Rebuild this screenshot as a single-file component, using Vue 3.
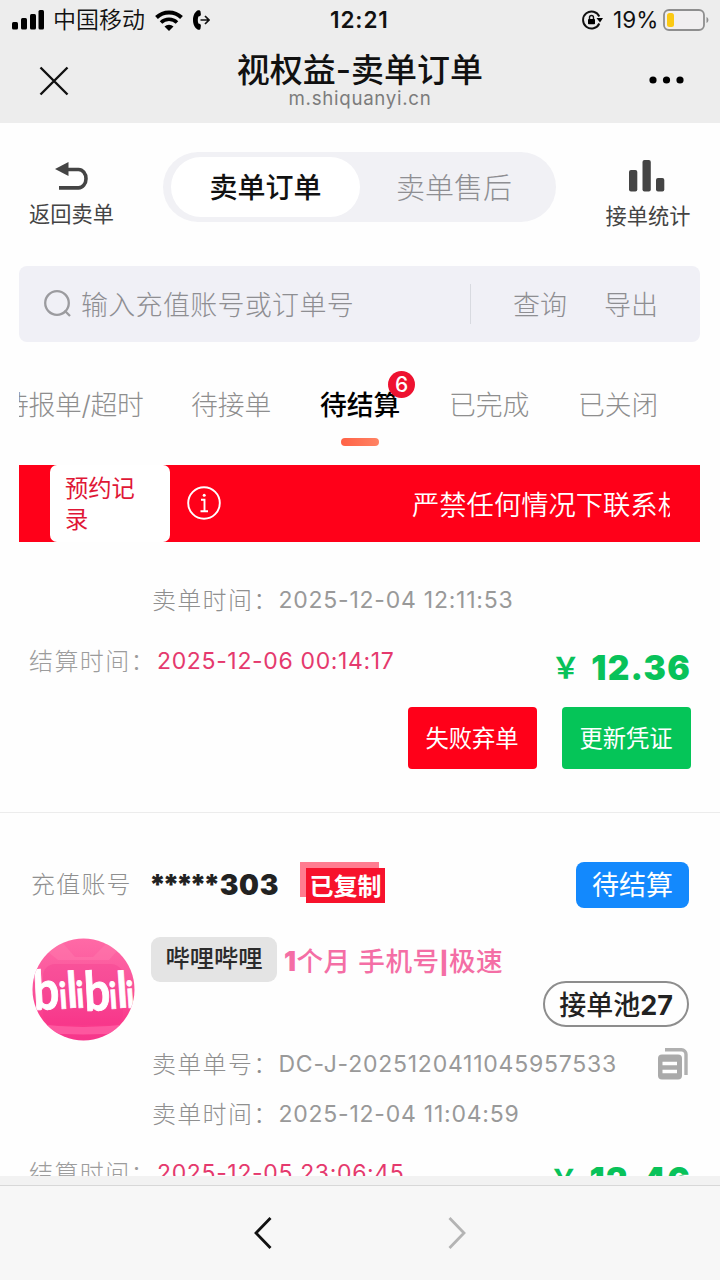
<script setup>
const tabs = [
  { label: '待报单/超时' },
  { label: '待接单' },
  { label: '待结算', active: true, count: 6 },
  { label: '已完成' },
  { label: '已关闭' },
]
</script>

<template>
  <div class="phone">
    <header class="top">
      <div class="status">
        <svg class="signal" width="32" height="20" viewBox="0 0 32 20">
          <rect x="0" y="12" width="6" height="7.5" rx="1.5" />
          <rect x="9" y="8" width="6" height="11.5" rx="1.5" />
          <rect x="18" y="4" width="6" height="15.5" rx="1.5" />
          <rect x="26.500" y="0" width="5.500" height="19.500" rx="1.5" />
        </svg>
        <span class="carrier">中国移动</span>
        <svg class="wifi" width="28" height="21" viewBox="0 0 28 21">
          <path d="M1.500 7.500a18 18 0 0 1 25 0" fill="none" stroke="#000" stroke-width="4" />
          <path d="M6 12.500a11.500 11.500 0 0 1 16 0" fill="none" stroke="#000" stroke-width="3.600" />
          <path d="M9.500 16.500a6.500 6.500 0 0 1 9 0L14 21z" />
        </svg>
        <svg class="call" width="17" height="20" viewBox="0 0 17 20">
          <path d="M5 .3c1.500-.5 2.300.2 2.500 1.200l.4 2.800c0 1.400-.8 1.800-2.500 2.200-.8 2.200-.8 4.800 0 7 1.700.4 2.500.8 2.500 2.200l-.4 2.800c-.2 1-1 1.700-2.500 1.200C2 18.500 0 14.500 0 10S2 1.500 5 .3z" />
          <path d="M7.500 10H16M12 6l4 4-4 4" fill="none" stroke="#111" stroke-width="1.700" />
        </svg>
        <span class="clock">12:21</span>
        <svg class="lock" width="21" height="20" viewBox="0 0 21 20">
          <path d="M17.300 13.500A8.500 8.500 0 1 1 17.300 6.500" fill="none" stroke="#111" stroke-width="1.900" />
          <path d="M14.500 8H21l-3 4.500z" />
          <rect x="6" y="9" width="7" height="5.300" rx=".8" />
          <path d="M7.500 9V7.500a2 2 0 0 1 4 0V9" fill="none" stroke="#111" stroke-width="1.400" />
        </svg>
        <span class="percent">19%</span>
        <svg class="battery" width="46" height="23" viewBox="0 0 46 23">
          <rect x="1" y="1" width="40" height="20" rx="5" fill="#f1eff0" stroke="#8e8e8e" stroke-width="1.800" />
          <rect x="4" y="4" width="7" height="14" rx="2.500" fill="#fbc914" />
          <path d="M43.500 8c2.500 1 2.500 5 0 6z" fill="#8e8e8e" />
        </svg>
      </div>
      <div class="nav">
        <svg class="close" width="30" height="30" viewBox="0 0 30 30">
          <path d="M1.500 1.500l27 27M28.500 1.500l-27 27" fill="none" stroke="#111" stroke-width="2.400" />
        </svg>
        <div class="heading">
          <div class="title">视权益-卖单订单</div>
          <div class="url">m.shiquanyi.cn</div>
        </div>
        <svg class="more" width="36" height="8" viewBox="0 0 36 8">
          <circle cx="4" cy="4" r="3.600" /><circle cx="17.500" cy="4" r="3.600" /><circle cx="31" cy="4" r="3.600" />
        </svg>
      </div>
    </header>

    <main class="page">
      <section class="toolbar">
        <div class="tool back">
          <svg width="34" height="28" viewBox="0 0 34 28">
            <path d="M12 7.500h11.500a7.500 9.200 0 0 1 0 18.400H4" fill="none" stroke="#444" stroke-width="3.600" />
            <path d="M0 7L13.500 0v14z" fill="#444" />
          </svg>
          <span>返回卖单</span>
        </div>
        <div class="segment">
          <span class="seg on">卖单订单</span>
          <span class="seg off">卖单售后</span>
        </div>
        <div class="tool stats">
          <svg width="36" height="32" viewBox="0 0 36 32" fill="#444">
            <rect x="0" y="10" width="8.300" height="21.500" rx="2" />
            <rect x="13.500" y="0" width="8.300" height="31.500" rx="2" />
            <rect x="27" y="18" width="8.300" height="13.500" rx="2" />
          </svg>
          <span>接单统计</span>
        </div>
      </section>

      <section class="search">
        <svg width="28" height="28" viewBox="0 0 28 28" fill="none" stroke="#9b9b9f" stroke-width="2.300">
          <circle cx="13" cy="13" r="11.800" />
          <path d="M20.500 20.500l5.500 5.500" />
        </svg>
        <span class="placeholder">输入充值账号或订单号</span>
        <span class="query">查询</span>
        <span class="export">导出</span>
      </section>

      <nav class="tabs">
        <div v-for="t in tabs" :key="t.label" class="tab" :class="{ active: t.active }">
          {{ t.label }}<b v-if="t.count" class="count">{{ t.count }}</b>
        </div>
      </nav>

      <section class="notice">
        <div class="booking">预约记<br />录</div>
        <svg width="34" height="34" viewBox="0 0 34 34" fill="none" stroke="#fff" stroke-width="1.900">
          <circle cx="17" cy="17" r="15.800" />
          <path d="M14 13.800h3.500v11M13.500 25.300h7.500" />
          <circle cx="17.200" cy="9.300" r="1.500" fill="#fff" stroke="none" />
        </svg>
        <div class="marquee">严禁任何情况下联系机主</div>
      </section>

      <article class="order first">
        <div class="meta sold">卖单时间：<span class="num">2025-12-04 12:11:53</span></div>
        <div class="settle">
          <span class="label">结算时间：</span><span class="date">2025-12-06 00:14:17</span>
          <span class="price"><i>￥</i>12.36</span>
        </div>
        <div class="actions">
          <button class="btn fail">失败弃单</button>
          <button class="btn update">更新凭证</button>
        </div>
      </article>

      <article class="order second">
        <div class="account">
          <span class="label">充值账号</span>
          <strong><span class="stars">*****</span>303</strong>
          <span class="copied"><em>已复制</em></span>
          <span class="state">待结算</span>
        </div>
        <div class="product">
          <svg class="avatar" width="104" height="104" viewBox="0 0 104 104">
            <defs>
              <clipPath id="disc"><circle cx="52.500" cy="51.500" r="51" /></clipPath>
              <linearGradient id="pink" x1="0" y1="0" x2="0" y2="1">
                <stop offset="0" stop-color="#ff6aa6" />
                <stop offset=".5" stop-color="#f9529a" />
                <stop offset=".8" stop-color="#fb3a8b" />
                <stop offset="1" stop-color="#f5358b" />
              </linearGradient>
            </defs>
            <g clip-path="url(#disc)">
              <rect width="104" height="104" fill="url(#pink)" />
              <path d="M31 4l13 15h18L77 4l9 9-8 9H27l-10-8z" fill="#ff83b2" opacity=".35" />
              <rect x="12" y="26" width="80" height="61" rx="12" fill="#f2358c" opacity=".3" />
              <path d="M0 85q52 8 104 0v9q-52 5-104 0z" fill="#ff65a8" opacity=".7" />
              <g fill="#fff" font-family="Lato" font-weight="700" stroke="#fff" stroke-width=".8">
                <text transform="translate(3 72) rotate(-3) scale(1 1.180)" font-size="46">b</text>
                <text transform="translate(29 71) rotate(-4) scale(.85 1)" font-size="37">i</text>
                <text transform="translate(37 70) rotate(-4) scale(.85 1)" font-size="50">l</text>
                <text transform="translate(46 70) rotate(-4) scale(.85 1)" font-size="37">i</text>
                <text transform="translate(54 73) rotate(-3) scale(1 1.180)" font-size="46">b</text>
                <text transform="translate(79 71) rotate(-4) scale(.85 1)" font-size="37">i</text>
                <text transform="translate(87 70) rotate(-4) scale(.85 1)" font-size="50">l</text>
                <text transform="translate(96 70) rotate(-4) scale(.85 1)" font-size="37">i</text>
              </g>
            </g>
          </svg>
          <span class="tag">哔哩哔哩</span>
          <span class="plan"><b>1</b>个月 手机号<b class="bar">|</b>极速</span>
          <span class="pool">接单池<b>27</b></span>
        </div>
        <div class="meta number">卖单单号：<span class="num">DC-J-2025120411045957533</span>
          <svg class="copy" width="30" height="32" viewBox="0 0 30 32">
            <path d="M7 1.800h16.500a4.500 4.500 0 0 1 4.500 4.500V27" fill="none" stroke="#b0b0b0" stroke-width="3.400" />
            <rect x="0" y="6.500" width="24" height="25" rx="4" fill="#aaa" />
            <path d="M4.500 15.500h14.500M4.500 23.500h14.500" stroke="#fff" stroke-width="3.600" />
          </svg>
        </div>
        <div class="meta sold2">卖单时间：<span class="num">2025-12-04 11:04:59</span></div>
        <div class="settle">
          <span class="label">结算时间：</span><span class="date">2025-12-05 23:06:45</span>
          <span class="price"><i>￥</i>12.46</span>
        </div>
      </article>
    </main>

    <footer class="bottom">
      <svg width="20" height="34" viewBox="0 0 20 34"><path d="M17.500 2L3 17l14.500 15" fill="none" stroke="#111" stroke-width="2.800" /></svg>
      <svg width="20" height="34" viewBox="0 0 20 34"><path d="M2.500 2L17 17 2.500 32" fill="none" stroke="#b4b4b4" stroke-width="2.800" /></svg>
    </footer>
  </div>
</template>

<style>
body { margin: 0; background: #fff; }
</style>

<style scoped>
* { box-sizing: border-box; }
svg { display: block; flex: none; }
.phone { width: 720px; height: 1280px; overflow: hidden; display: flex; flex-direction: column; background: #fefefe; font-family: Inter, "Noto Sans CJK SC", sans-serif; white-space: nowrap; color: #111; }
.top { height: 123px; background: #ededed; flex: none; }
.status { height: 40px; display: flex; align-items: center; padding-left: 12px; line-height: 40px; }
.carrier { margin-left: 9px; font-size: 23px; width: 94px; font-weight: 350; }
.wifi { margin-left: 8px; }
.call { margin-left: 10px; }
.clock { margin-left: 120px; width: 252px; font-size: 22.500px; font-weight: 600; letter-spacing: .9px; }
.percent { margin-left: 10px; width: 50px; font-size: 22.500px; letter-spacing: .1px; }
.nav { height: 83px; display: flex; align-items: flex-start; }
.close { margin: 26px 0 0 39px; }
.heading { width: 290px; margin-left: 146px; text-align: center; }
.title { margin-top: 10px; font-size: 33px; font-weight: 500; line-height: 40px; height: 38px; }
.url { font-size: 18.700px; line-height: 22px; color: #7c7c7c; letter-spacing: .7px; }
.more { margin: 36px 0 0 144px; }
.page { height: 1053px; overflow: hidden; flex: none; }
.toolbar { display: flex; height: 143px; padding-top: 29px; }
.tool { display: flex; flex-direction: column; align-items: center; color: #444; font-size: 21.200px; line-height: 26px; }
.back { width: 85px; margin-left: 29px; padding-top: 10px; gap: 11px; }
.stats { width: 86px; margin-left: 49px; padding-top: 8px; gap: 11px; }
.stats svg { margin-right: 2px; }
.segment { width: 393px; height: 70px; margin-left: 49px; padding: 5px 8px; border-radius: 35px; background: #f1f1f5; display: flex; line-height: 62px; }
.seg { text-align: center; height: 60px; }
.on { width: 189px; border-radius: 30px; background: #fff; font-size: 28px; font-weight: 500; }
.off { width: 188px; font-size: 29px; color: #8e8e92; line-height: 64px; font-weight: 300; }
.search { height: 76px; width: 681px; margin-left: 19px; border-radius: 8px; background: #f0f0f6; display: flex; align-items: center; padding-left: 25px; color: #8e8e92; font-size: 27px; line-height: 40px; font-weight: 300; }
.search span { padding-top: 4px; }
.search .placeholder { margin-left: 9px; width: 390px; letter-spacing: .3px; background: linear-gradient(#d8dae0, #d8dae0) right / 1px 40px no-repeat; }
.query { margin-left: 42px; }
.export { margin-left: 37px; }
.tabs { display: flex; width: 681px; height: 123px; margin-left: 19px; overflow: hidden; gap: 48px; line-height: 40px; padding-top: 43px; }
.tab { position: relative; flex: none; height: 65px; font-size: 26.800px; width: 81px; color: #8e8e8e; font-weight: 300; }
.tab:first-child { margin-left: -17px; width: 141px; letter-spacing: -.3px; }
.tab.active { color: #000; font-weight: 500; }
.active::after { content: ""; position: absolute; left: 21px; top: 53px; width: 38px; height: 8px; border-radius: 4px; background: linear-gradient(90deg, #ff6246, #ff8364); }
.count { position: absolute; left: 68px; top: -14px; width: 27px; height: 27px; border-radius: 50%; background: #ee1230; color: #fff; font-size: 21px; font-weight: 500; line-height: 27px; text-align: center; }
.notice { width: 681px; height: 77px; margin-left: 19px; background: #ff0019; display: flex; align-items: center; color: #fff; }
.booking { width: 120px; height: 77px; margin-left: 31px; padding: 8px 15px; background: #fff; border-radius: 7px; color: #df1736; font-size: 23.300px; line-height: 31px; }
.notice svg { margin: -1px 0 0 17px; }
.marquee { margin-left: 191px; width: 258px; overflow: hidden; font-size: 27.300px; line-height: 40px; padding-top: 4px; font-weight: 350; }
.order.first { height: 271px; padding-top: 43px; border-bottom: 1px solid #ececec; }
.meta { margin-left: 152px; height: 30px; line-height: 31px; font-size: 24px; letter-spacing: 1.300px; color: #8f8f8f; display: flex; font-weight: 300; }
.num { font-size: 23px; letter-spacing: .76px; font-weight: 400; color: #999; }
.settle { display: flex; height: 50px; margin: 21px 0 0 29px; line-height: 51px; position: relative; }
.label { color: #9c9c9c; font-size: 24px; letter-spacing: 1.400px; width: 128px; overflow: hidden; font-weight: 300; }
.date { font-size: 23px; letter-spacing: .65px; color: #e5396d; }
.price { margin-left: auto; margin-right: 29px; padding-top: 7px; font-size: 33.500px; letter-spacing: 1.200px; font-weight: 900; color: #08c25a; display: flex; }
.price i { font-style: normal; font-size: 29px; font-weight: 700; margin-right: 10px; }
.actions { display: flex; justify-content: flex-end; gap: 25px; padding: 21px 29px 0 0; }
.btn { width: 129px; height: 62px; border: 0; padding: 0 1px 2px 0; border-radius: 4px; color: #fff; font-family: inherit; font-size: 23.300px; }
.fail { background: #ff0019; }
.update { background: #05c558; }
.second { padding-top: 49px; }
.account { height: 46px; display: flex; align-items: center; padding-left: 31px; line-height: 46px; }
.account .label { color: #8f8f8f; font-size: 24px; letter-spacing: 1.200px; width: 118px; line-height: 48px; }
.account strong { font-size: 28px; font-weight: 900; width: 151px; color: #222; letter-spacing: .7px; line-height: 42px; }
.stars { letter-spacing: -3.500px; margin-right: 3px; }
.copied { width: 85px; height: 41px; margin-top: -6px; padding: 6px 0 0 6px; background: linear-gradient(#ff7c90, #ff7c90) 0 0 / 79px 35px no-repeat; }
.copied em { display: block; width: 79px; height: 35px; background: #f7122c; color: #fff; font: 700 24px/34px "Noto Sans CJK SC", sans-serif; text-align: center; }
.state { width: 113px; height: 46px; margin-left: 191px; padding-top: 1px; border-radius: 8px; background: #1389fd; color: #fff; font-size: 27px; text-align: center; }
.product { display: flex; height: 141px; padding: 29px 0 0 31px; }
.avatar { margin-top: 1px; }
.tag { width: 126px; height: 45px; margin-left: 16px; border-radius: 9px; background: #e4e4e4; color: #2b2b2b; text-align: center; font-size: 24.300px; line-height: 43px; font-weight: 500; }
.plan { width: 259px; margin-left: 7px; color: #f46ea5; font-size: 26.600px; letter-spacing: .5px; line-height: 49px; font-weight: 500; }
.plan b { font-weight: 900; }
.plan .bar { font-size: 22px; }
.pool { width: 146px; height: 46px; margin-top: 44px; border: 2px solid #8d8d8d; border-radius: 23px; color: #222; font-size: 27px; line-height: 45px; text-align: center; font-weight: 500; }
.pool b { font-weight: 700; }
.number { position: relative; }
.copy { position: absolute; left: 506px; top: -1px; }
.sold2 { margin-top: 20px; }
.second .settle { margin-top: 19px; }
.bottom { height: 104px; background: linear-gradient(#f2f2f2 0 9px, #d8d8d8 9px 10px, #f7f7f7 10px); display: flex; justify-content: center; gap: 174px; padding-top: 40px; flex: none; }
</style>
